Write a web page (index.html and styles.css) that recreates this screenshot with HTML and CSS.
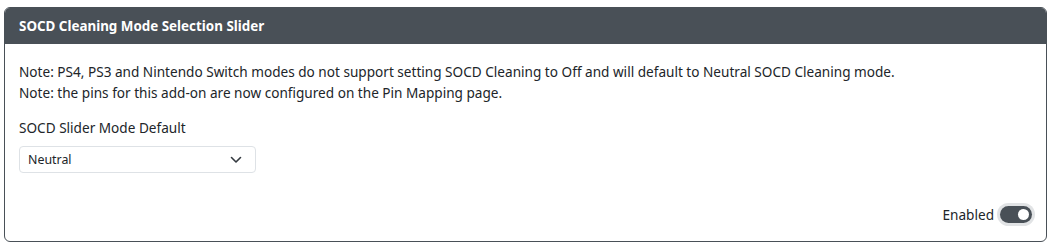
FILE: index.html
```html
<!DOCTYPE html>
<html>
<head>
<meta charset="utf-8">
<link rel="stylesheet" href="styles.css">
</head>
<body>
<div class="card">
  <div class="card-header">SOCD Cleaning Mode Selection Slider</div>
  <div class="card-body">
    <p class="note">Note: PS4, PS3 and Nintendo Switch modes do not support setting SOCD Cleaning to Off and will default to Neutral SOCD Cleaning mode.</p>
    <p class="note">Note: the pins for this add-on are now configured on the Pin Mapping page.</p>
    <label class="field-label">SOCD Slider Mode Default</label>
    <div class="select">
      <span>Neutral</span>
      <svg class="chev" width="12" height="8" viewBox="0 0 12 8"><path d="M1.5 1.5 L6 6 L10.5 1.5" fill="none" stroke="#343a40" stroke-width="1.6" stroke-linecap="round" stroke-linejoin="round"/></svg>
    </div>
    <div class="toggle-row">
      <span class="toggle-label">Enabled</span>
      <span class="switch"><span class="knob"></span></span>
    </div>
  </div>
</div>
</body>
</html>
```
FILE: styles.css
```css
html, body { margin: 0; padding: 0; background: #fff; }
body {
  padding: 7px 5px 0 4px;
  font-family: "Noto Sans", "Open Sans", sans-serif;
  color: #212529;
}
.card {
  border: 1px solid #495057;
  border-radius: 6px;
  overflow: hidden;
  height: 235px;
  box-sizing: border-box;
  display: flex;
  flex-direction: column;
}
.card-header {
  background: #495057;
  color: #fff;
  font-weight: 700;
  font-size: 13.4px;
  height: 36px;
  line-height: 36px;
  padding: 0 14px;
}
.card-body {
  flex: 1;
  padding: 17px 14px 0 14px;
  display: flex;
  flex-direction: column;
}
.note {
  margin: 0;
  font-size: 13.6px;
  line-height: 21px;
}
.field-label {
  margin-top: 14px;
  font-size: 13.6px;
  line-height: 21px;
}
.select {
  margin-top: 8px;
  width: 237px;
  height: 27px;
  box-sizing: border-box;
  border: 1px solid #dee2e6;
  border-radius: 4px;
  display: flex;
  align-items: center;
  justify-content: space-between;
  padding: 0 13px 0 8px;
  font-size: 12.4px;
  color: #212529;
}
.toggle-row {
  margin-top: 32px;
  display: flex;
  justify-content: flex-end;
  align-items: center;
  gap: 6px;
  padding-right: 0;
}
.toggle-label { font-size: 13.6px; }
.switch {
  width: 32px;
  height: 17px;
  border-radius: 9px;
  background: #495057;
  box-shadow: 0 0 0 3px #e1e3e5;
  display: flex;
  justify-content: flex-end;
  align-items: center;
  padding: 0 3px;
  box-sizing: border-box;
}
.knob {
  width: 11px;
  height: 11px;
  border-radius: 50%;
  background: #fff;
}
```
